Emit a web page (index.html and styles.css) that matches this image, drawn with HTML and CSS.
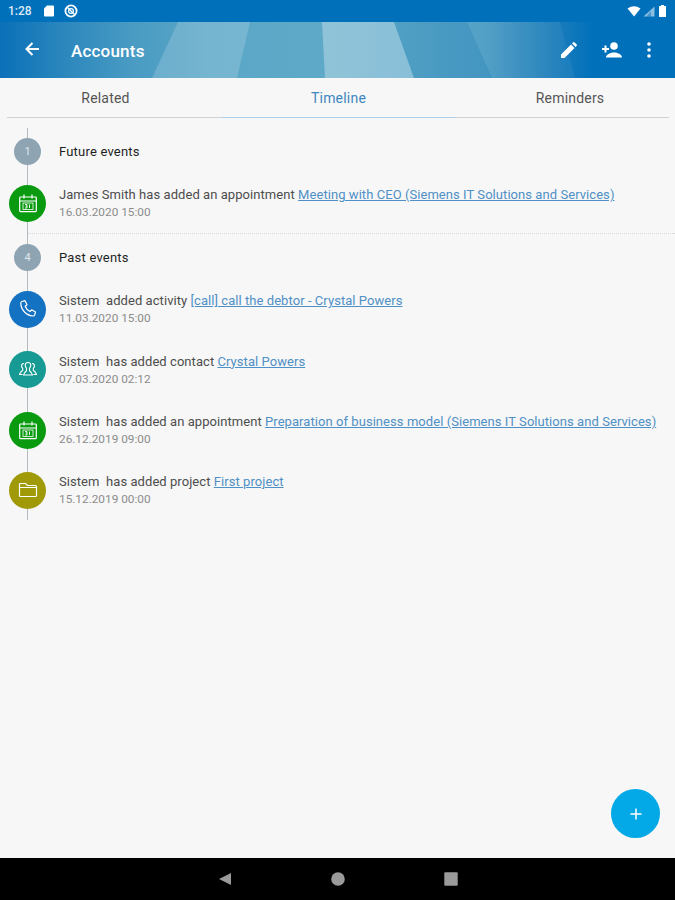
FILE: index.html
```html
<!DOCTYPE html>
<html lang="en">
<head>
<meta charset="utf-8">
<title>Accounts</title>
<link rel="stylesheet" href="styles.css">
</head>
<body>
<div class="app">
  <div class="status">
    <span class="clock">1:28</span>
    <svg class="st-sd" viewBox="0 0 12 12"><path d="M4 0.5h6a1 1 0 0 1 1 1v9a1 1 0 0 1-1 1H2a1 1 0 0 1-1-1V3.5z" fill="#fff"/></svg>
    <svg class="st-dnd" viewBox="0 0 14 14"><circle cx="7" cy="7" r="5.6" fill="none" stroke="#fff" stroke-width="1.8"/><circle cx="7" cy="7" r="2.4" fill="none" stroke="#fff" stroke-width="1.2"/><path d="M3.5 3.5l7 7" stroke="#fff" stroke-width="1.3"/></svg>
    <span class="st-gap"></span>
    <svg class="st-wifi" viewBox="0 0 14 11"><path d="M0.5 2.5Q7 -2 13.5 2.5L7 10.5z" fill="#fff"/></svg>
    <svg class="st-cell" viewBox="0 0 12 11"><path d="M11.5 0.5v10H0.5z" fill="#fff" opacity=".55"/><path d="M8 5v5.500H3.500z" fill="#0070bb" opacity=".5"/></svg>
    <svg class="st-bat" viewBox="0 0 7 12"><path d="M2 0h3v1h1.500a.5.5 0 0 1 .5.500V11.500a.5.5 0 0 1-.5.500H.500a.5.5 0 0 1-.5-.5V1.500A.5.5 0 0 1 .5 1H2z" fill="#fff"/></svg>
  </div>

  <header class="toolbar">
    <svg class="banner" viewBox="0 0 675 56" preserveAspectRatio="none">
      <polygon points="178,0 250,0 237,56 152,56" fill="#fff" opacity=".17"/>
      <polygon points="322,0 394,0 414,56 325,56" fill="#fff" opacity=".3"/>
      <polygon points="394,0 467,0 492,56 414,56" fill="#0a6fb0" opacity=".1"/>
      <polygon points="467,0 560,0 575,56 492,56" fill="#fff" opacity=".05"/>
    </svg>
    <svg class="tb-back" viewBox="0 0 16 16"><path d="M15 8H3M8.500 2L2.500 8l6 6" fill="none" stroke="#fff" stroke-width="2"/></svg>
    <span class="tb-title">Accounts</span>
    <span class="tb-gap"></span>
    <svg class="tb-edit" viewBox="0 0 16 16"><path d="M0 16v-3.500L10 2.500 13.500 6 3.500 16zM11 1.500l1-1a1.200 1.200 0 0 1 1.700 0l1.800 1.800a1.200 1.200 0 0 1 0 1.700l-1 1z" fill="#fff"/></svg>
    <svg class="tb-add" viewBox="0 0 22 16"><circle cx="13" cy="4" r="3.800" fill="#fff"/><path d="M5 15.500c0-3.500 5-5 8-5s8 1.500 8 5zM3.500 3.500v2.500H1v2h2.500v2.500h2V8H8V6H5.500V3.500z" fill="#fff"/></svg>
    <svg class="tb-more" viewBox="0 0 4 16"><circle cx="2" cy="2" r="1.800" fill="#fff"/><circle cx="2" cy="8" r="1.800" fill="#fff"/><circle cx="2" cy="14" r="1.800" fill="#fff"/></svg>
  </header>

  <nav class="tabs">
    <span class="tab tab-first">Related</span>
    <span class="tab tab-active">Timeline</span>
    <span class="tab tab-last">Reminders</span>
  </nav>

  <main class="content">
    <div class="timeline">
      <div class="group">
        <span class="count">1</span>
        <span class="group-title">Future events</span>
      </div>
      <div class="event">
        <span class="badge b-green">
          <svg class="ic" viewBox="0 0 20 20"><use href="#cal"/></svg>
        </span>
        <div class="body">
          <div class="line">James Smith has added an appointment <a class="link">Meeting with CEO (Siemens IT Solutions and Services)</a></div>
          <div class="date">16.03.2020 15:00</div>
        </div>
      </div>
      <div class="divider"></div>
      <div class="group">
        <span class="count">4</span>
        <span class="group-title">Past events</span>
      </div>
      <div class="event">
        <span class="badge b-blue">
          <svg class="ic" viewBox="0 0 20 20"><path d="M4 2.500l3-.8 2 4-1.800 1.500c.8 2.400 2.400 4.200 4.800 5.300l1.600-1.700 3.900 2.200-.8 3c-.3.700-1 1-1.700 1C8 16.500 2.800 10.500 2.800 4c0-.6.500-1.300 1.200-1.500z" fill="none" stroke="#fff" stroke-width="1.200" stroke-linejoin="round"/></svg>
        </span>
        <div class="body">
          <div class="line">Sistem&nbsp; added activity <a class="link">[call] call the debtor - Crystal Powers</a></div>
          <div class="date">11.03.2020 15:00</div>
        </div>
      </div>
      <div class="event">
        <span class="badge b-teal">
          <svg class="ic" viewBox="0 0 20 20"><g fill="none" stroke="#fff" stroke-width="1.100" stroke-linejoin="round"><path d="M10 2.500c-1.800 0-2.800 1.200-2.800 2.800 0 1.300.6 2.200 1.300 2.900v2.500c-1 .8-2.500 2-3 4.300h9c-.5-2.300-2-3.500-3-4.300V8.200c.7-.7 1.300-1.600 1.300-2.900 0-1.600-1-2.800-2.800-2.800z"/><path d="M6 3.500c-1.500.1-2.500 1.100-2.500 2.400 0 1 .6 1.800 1.200 2.300v2.200c-1.200.8-2.700 1.700-3.200 4.100h3M14 3.500c1.500.1 2.500 1.100 2.500 2.400 0 1-.6 1.800-1.200 2.300v2.200c1.200.8 2.700 1.700 3.200 4.100h-3"/></g></svg>
        </span>
        <div class="body">
          <div class="line">Sistem&nbsp; has added contact <a class="link">Crystal Powers</a></div>
          <div class="date">07.03.2020 02:12</div>
        </div>
      </div>
      <div class="event">
        <span class="badge b-green">
          <svg class="ic" viewBox="0 0 20 20"><use href="#cal"/></svg>
        </span>
        <div class="body">
          <div class="line">Sistem&nbsp; has added an appointment <a class="link">Preparation of business model (Siemens IT Solutions and Services)</a></div>
          <div class="date">26.12.2019 09:00</div>
        </div>
      </div>
      <div class="event">
        <span class="badge b-olive">
          <svg class="ic" viewBox="0 0 20 20"><path d="M1.500 4.500a1 1 0 0 1 1-1h5l2 2h8a1 1 0 0 1 1 1v9a1 1 0 0 1-1 1h-15a1 1 0 0 1-1-1zM1.500 7.500h17" fill="none" stroke="#fff" stroke-width="1.200"/></svg>
        </span>
        <div class="body">
          <div class="line">Sistem&nbsp; has added project <a class="link">First project</a></div>
          <div class="date">15.12.2019 00:00</div>
        </div>
      </div>
    </div>
    <button class="fab" aria-label="Add"><svg viewBox="0 0 12 12"><path d="M6 .5v11M.5 6h11" stroke="#fff" stroke-width="1.500"/></svg></button>
  </main>

  <footer class="navbar">
    <svg class="nav-ic" viewBox="0 0 14 14"><path d="M13 1v12L1 7z" fill="#9a9a9a"/></svg>
    <svg class="nav-ic" viewBox="0 0 14 14"><circle cx="7" cy="7" r="6.800" fill="#9a9a9a"/></svg>
    <svg class="nav-ic" viewBox="0 0 14 14"><rect x=".3" y=".3" width="13.400" height="13.400" rx="1" fill="#9a9a9a"/></svg>
  </footer>
</div>
<svg class="defs" aria-hidden="true"><defs><g id="cal"><path d="M2.500 4h15a.8.8 0 0 1 .8.800v13a.8.8 0 0 1-.8.800h-15a.8.800 0 0 1-.8-.8v-13a.8.8 0 0 1 .8-.8zM1.700 8h16.600M6 1.500V5.500M14 1.500V5.500" fill="none" stroke="#fff" stroke-width="1.200"/><rect x="5" y="10" width="10" height="6.500" fill="none" stroke="#fff" stroke-width=".8"/><path d="M7 11.500h2v1.500H7.500M9 13v2H7M11.500 11.500v3.500" fill="none" stroke="#fff" stroke-width=".9"/></g></defs></svg>
</body>
</html>
```

FILE: styles.css
```css
* { box-sizing: border-box; }
html, body { margin: 0; padding: 0; height: 100%; }
body { font-family: Roboto, "Liberation Sans", sans-serif; background: #f7f7f7; overflow: hidden; }
.defs { position: absolute; width: 0; height: 0; }
.app { display: flex; flex-direction: column; height: 900px; }

.status { height: 22px; background: #0070bb; display: flex; align-items: center; padding: 0 9px 0 8px; color: #dfeaf4; flex: none; }
.clock { font-size: 12px; font-weight: 500; width: 35px; }
.st-sd { width: 12px; height: 12px; margin-right: 9px; }
.st-dnd { width: 14px; height: 14px; }
.st-gap { flex: 1; }
.st-wifi { width: 14px; height: 11px; margin-right: 2px; }
.st-cell { width: 12px; height: 11px; margin-right: 4px; }
.st-bat { width: 7px; height: 12px; }

.toolbar { position: relative; height: 56px; flex: none; display: flex; align-items: center; padding: 0 24px 0 24px; background: linear-gradient(90deg, #0a70b8 0%, #2d88bd 10%, #4a9cc3 20%, #5ba7c7 32%, #5fa9c8 50%, #55a3c6 62%, #4a9bc3 72%, #2180bb 81%, #0070bb 88%); }
.banner { position: absolute; inset: 0; width: 100%; height: 100%; }
.toolbar > *:not(.banner) { position: relative; }
.tb-back { width: 16px; height: 16px; margin-right: 31px; top: -1px; }
.tb-title { color: #fff; font-size: 17px; font-weight: 500; letter-spacing: .2px; top: 1px; }
.tb-gap { flex: 1; }
.tb-edit { width: 16px; height: 16px; margin-right: 24px; }
.tb-add { width: 22px; height: 16px; margin-right: 24px; }
.tb-more { width: 4px; height: 16px; }

.tabs { height: 40px; flex: none; display: grid; grid-template-columns: 215px 233px 214px; margin: 0 6px 0 7px; border-bottom: 1px solid #cfd2d4; }
.tab { display: flex; align-items: center; justify-content: center; font-size: 14px; color: #555; letter-spacing: .2px; padding-top: 1px; }
.tab-first { padding-right: 18px; }
.tab-last { padding-left: 16px; }
.tab-active { color: #3f87bf; border-bottom: 1px solid #a9cdea; margin-bottom: -1px; }

.content { position: relative; flex: 1; min-height: 0; }
.timeline { position: relative; padding-top: 20px; }
.timeline::before { content: ""; position: absolute; left: 27px; top: 10px; width: 1px; height: 392px; background: #b4bcc2; }

.group { position: relative; display: flex; align-items: center; height: 26px; }
.count { width: 27px; height: 27px; flex: none; margin: 0 18px 0 14px; border-radius: 50%; background: #8fa4b3; color: #dde4ea; font-size: 11px; display: flex; align-items: center; justify-content: center; }
.group-title { font-size: 13px; line-height: 15px; color: #1f1f1f; letter-spacing: .2px; }

.event { position: relative; display: flex; align-items: center; height: 60.300px; }
.group + .event { margin-top: 9px; }
.badge { width: 37px; height: 37px; flex: none; margin: 0 13px 0 9px; border-radius: 50%; display: flex; align-items: center; justify-content: center; }
.ic { width: 20px; height: 20px; }
.b-green { background: #0a9a10; }
.b-blue { background: #1472c2; }
.b-teal { background: #179a93; }
.b-olive { background: #a09a08; }
.body { display: flex; flex-direction: column; gap: 3px; margin-top: 1px; }
.line { font-size: 13px; letter-spacing: .06px; line-height: 14px; color: #4d4d4d; white-space: nowrap; }
.link { color: #4f90c6; text-decoration: underline; }
.date { font-size: 11.800px; line-height: 14px; color: #8c8c8c; }

.divider { height: 0; border-top: 1px dotted #d6d6d6; margin: 0 0 10px 28px; position: relative; }

.fab { position: absolute; right: 15px; bottom: 20px; width: 49px; height: 49px; border: 0; border-radius: 50%; background: #03a9e6; display: flex; align-items: center; justify-content: center; padding: 0; }
.fab svg { width: 12px; height: 12px; }

.navbar { height: 42px; flex: none; background: #000; display: flex; align-items: center; justify-content: center; gap: 99px; }
.nav-ic { width: 14px; height: 14px; }
```
